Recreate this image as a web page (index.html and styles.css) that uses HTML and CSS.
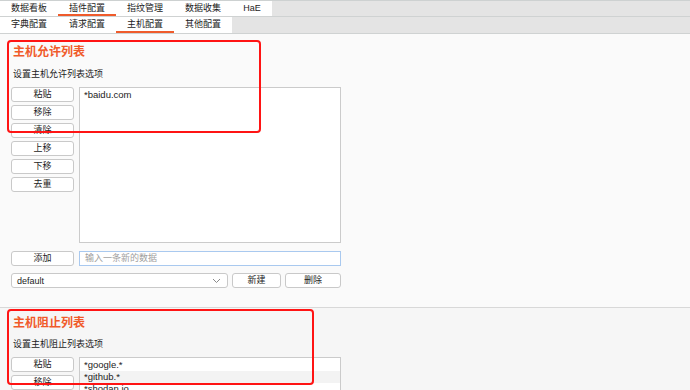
FILE: index.html
```html
<!DOCTYPE html>
<html lang="zh-CN">
<head>
    <meta charset="UTF-8">
    <meta name="viewport" content="width=device-width, initial-scale=1.0">
    <title>主机配置</title>
    <link rel="stylesheet" href="styles.css">
</head>
<body>
    <!-- main tabs -->
    <div class="tabbar top">
        <div class="tab">数据看板</div>
        <div class="tab active">插件配置</div>
        <div class="tab">指纹管理</div>
        <div class="tab">数据收集</div>
        <div class="tab">HaE</div>
    </div>
    <!-- config tabs -->
    <div class="tabbar">
        <div class="tab">字典配置</div>
        <div class="tab">请求配置</div>
        <div class="tab active">主机配置</div>
        <div class="tab">其他配置</div>
    </div>

    <div class="content">
        <section class="block allow">
            <h2 class="block-title">主机允许列表</h2>
            <p class="block-desc">设置主机允许列表选项</p>
            <div class="list-row">
                <div class="btn-col">
                    <button class="btn">粘贴</button>
                    <button class="btn">移除</button>
                    <button class="btn">清除</button>
                    <button class="btn">上移</button>
                    <button class="btn">下移</button>
                    <button class="btn">去重</button>
                </div>
                <div class="list-box tall">
                    <div class="list-item">*baidu.com</div>
                </div>
            </div>
            <div class="add-row">
                <button class="btn">添加</button>
                <div class="text-input">输入一条新的数据</div>
            </div>
            <div class="rule-row">
                <div class="select">
                    <span>default</span>
                    <svg width="9" height="6" viewBox="0 0 9 6"><path d="M1 1 L4.5 4.5 L8 1" fill="none" stroke="#8a8a8a" stroke-width="1"/></svg>
                </div>
                <button class="btn wide">新建</button>
                <button class="btn wider">删除</button>
            </div>
        </section>

        <section class="block deny">
            <h2 class="block-title">主机阻止列表</h2>
            <p class="block-desc">设置主机阻止列表选项</p>
            <div class="list-row">
                <div class="btn-col">
                    <button class="btn">粘贴</button>
                    <button class="btn">移除</button>
                </div>
                <div class="list-box">
                    <div class="list-item">*google.*</div>
                    <div class="list-item odd">*github.*</div>
                    <div class="list-item">*shodan.io</div>
                </div>
            </div>
        </section>

        <!-- red highlight marks drawn over the screenshot -->
        <div class="mark mark-allow"></div>
        <div class="mark mark-deny"></div>
    </div>
</body>
</html>
```

FILE: styles.css
```css
* {
    box-sizing: border-box;
}

body {
    margin: 0;
    font-family: "Liberation Sans", "Noto Sans CJK SC", sans-serif;
    font-size: 9px;
    color: #1c1c1c;
    background: #fafafa;
    overflow: hidden;
    height: 390px;
}

.tabbar {
    display: flex;
    height: 17px;
    background: #e4e4e4;
    border-bottom: 1px solid #cfd2d2;
}

.tabbar.top {
    border-top: 1px solid #cdd1d1;
    height: 17px;
}

.tab {
    background: #fff;
    padding: 0 11px;
    width: 58px;
    text-align: center;
    line-height: 15px;
    white-space: nowrap;
}

.tab:last-child:nth-child(5) {
    width: 40px;
}

.tab.active {
    box-shadow: inset 0 -2px 0 #ef5b2b;
}

.content {
    position: relative;
}

.block {
    padding: 10px 0 0 11px;
}

.block.allow {
    height: 274px;
    border-bottom: 1px solid #d8d8d8;
}

.block.deny {
    padding-top: 7px;
    background: #f6f6f6;
    height: 82px;
    overflow: hidden;
}

.block-title {
    margin: 0 0 0 2px;
    font-size: 12px;
    line-height: 16px;
    font-weight: bold;
    color: #f05a2a;
}

.block-desc {
    margin: 8px 0 0 2px;
    line-height: 12px;
}

.block.deny .block-desc {
    margin-top: 7px;
}

.list-row {
    display: flex;
    gap: 5px;
    margin-top: 7px;
}

.btn-col {
    display: flex;
    flex-direction: column;
    gap: 3px;
}

.btn {
    width: 63px;
    height: 15px;
    padding: 0;
    font-family: inherit;
    font-size: 9px;
    color: #1c1c1c;
    line-height: 13px;
    background: #fff;
    border: 1px solid #c9c9c9;
    border-radius: 3px;
}

.btn.wide {
    width: 49px;
}

.btn.wider {
    width: 56px;
}

.list-box {
    width: 262px;
    height: 60px;
    padding-top: 1px;
    background: #fff;
    border: 1px solid #cbcbcb;
}

.list-box.tall {
    height: 156px;
}

.list-item {
    padding-left: 4px;
    line-height: 12px;
    font-size: 9.5px;
}

.list-item.odd {
    background: #f3f3f3;
}

.add-row,
.rule-row {
    display: flex;
    gap: 5px;
}

.add-row {
    margin-top: 8px;
}

.rule-row {
    margin-top: 7px;
    gap: 4px;
}

.text-input {
    width: 262px;
    height: 15px;
    padding-left: 5px;
    line-height: 13px;
    color: #a0a0a0;
    background: #fff;
    border: 1px solid #a9c9ef;
}

.select {
    display: flex;
    align-items: center;
    justify-content: space-between;
    width: 217px;
    height: 15px;
    padding: 0 6px 0 5px;
    background: #fff;
    border: 1px solid #c9c9c9;
    border-radius: 3px;
}

.mark {
    position: absolute;
    border: 2px solid #ff1414;
    border-radius: 4px;
}

.mark-allow {
    left: 7px;
    top: 6px;
    width: 254px;
    height: 93px;
}

.mark-deny {
    left: 7px;
    top: 275px;
    width: 307px;
    height: 76px;
}
```
